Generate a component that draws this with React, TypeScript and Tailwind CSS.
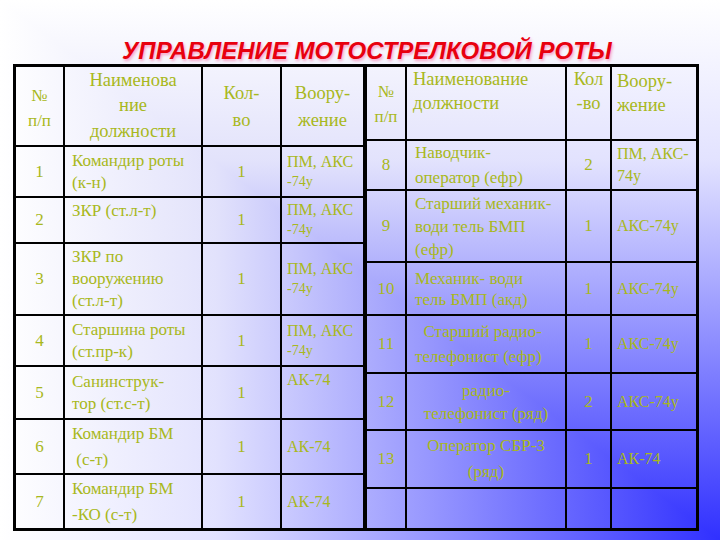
import React from "react";

type RowL = {
  n: string;
  name: string[];
  nameTop?: boolean;
  nameLead?: string;
  q: string;
  w: string[];
  wTop?: boolean;
};

const rowsL: RowL[] = [
  { n: "1", name: ["Командир роты", "(к-н)"], q: "1", w: ["ПМ, АКС", "-74у"] },
  { n: "2", name: ["ЗКР (ст.л-т)"], nameTop: true, q: "1", w: ["ПМ, АКС", "-74у"] },
  { n: "3", name: ["ЗКР по", "вооружению", "(ст.л-т)"], q: "1", w: ["ПМ, АКС", "-74у"] },
  { n: "4", name: ["Старшина роты", "(ст.пр-к)"], q: "1", w: ["ПМ, АКС", "-74у"] },
  { n: "5", name: ["Санинструк-", "тор (ст.с-т)"], q: "1", w: ["АК-74"], wTop: true },
  { n: "6", name: ["Командир БМ", "\u00a0(с-т)"], nameLead: "leading-[26px]", q: "1", w: ["АК-74"] },
  { n: "7", name: ["Командир БМ", "-КО (с-т)"], nameLead: "leading-[26px]", q: "1", w: ["АК-74"] },
];

type RowR = {
  n: string;
  name: string[];
  center?: boolean;
  lead?: string;
  q: string;
  w: string[];
};

const rowsR: RowR[] = [
  { n: "8", name: ["Наводчик-", "оператор (ефр)"], lead: "leading-[25px]", q: "2", w: ["ПМ, АКС-", "74у"] },
  { n: "9", name: ["Старший механик-", "води тель БМП", "(ефр)"], q: "1", w: ["АКС-74у"] },
  { n: "10", name: ["Механик- води", "тель БМП (акд)"], lead: "leading-[21px]", q: "1", w: ["АКС-74у"] },
  { n: "11", name: ["\u00a0\u00a0Старший радио-", "телефонист (ефр)"], lead: "leading-[25px]", q: "1", w: ["АКС-74у"] },
  { n: "12", name: ["радио-", "телефонист (ряд)"], center: true, q: "2", w: ["АКС-74у"] },
  { n: "13", name: ["Оператор СБР-3", "(ряд)"], center: true, lead: "leading-[26px]", q: "1", w: ["АК-74"] },
];

const serif = "font-['Liberation_Serif','Times_New_Roman',serif]";

export default function App() {
  return (
    <div className="relative w-[720px] h-[540px] overflow-hidden bg-[linear-gradient(to_right,#ffffff_0%,#e2e2fb_30%,#3030ff_100%),linear-gradient(to_bottom,#ffffff_0%,#e2e2fb_30%,#3030ff_100%)] bg-blend-lighten text-[#a8b820]">
      <div className="pt-[37px] flex flex-col">
        <div className="h-[27px] pl-[14px] text-center font-['Liberation_Sans',Arial,sans-serif] font-bold italic text-[24px] leading-[27px] text-[#e8000e] [text-shadow:1px_2px_3px_#f6a0c6]">
          УПРАВЛЕНИЕ МОТОСТРЕЛКОВОЙ РОТЫ
        </div>
        <div className="flex pl-[13px] font-serif">
          {/* Left table */}
          <div className={`grid w-[354px] grid-cols-[49px_138px_79px_81px] grid-rows-[80px_51px_46px_72px_51px_53px_55px_53px] border-t-[3px] border-l-[3px] border-b-[3px] border-r-[4px] border-black ${serif}`}>
            <div className="border-r-2 border-b-2 border-black flex flex-col items-center justify-center text-[17px] leading-[25px] pt-[3px]">
              <span>№</span>
              <span>п/п</span>
            </div>
            <div className="border-r-2 border-b-2 border-black flex flex-col items-center justify-center text-[18.5px] leading-[25.5px]">
              <span>Наименова</span>
              <span>ние</span>
              <span>должности</span>
            </div>
            <div className="border-r-2 border-b-2 border-black flex flex-col items-center justify-center text-[18.5px] leading-[27px] pt-[1px]">
              <span>Кол-</span>
              <span>во</span>
            </div>
            <div className="border-b-2 border-black flex flex-col items-center justify-center text-[18.5px] leading-[27px] pt-[1px]">
              <span>Воору-</span>
              <span>жение</span>
            </div>
            {rowsL.map((r, i) => {
              const last = i === rowsL.length - 1;
              const bb = last ? "" : "border-b-2";
              return (
                <React.Fragment key={r.n}>
                  <div className={`border-r-2 ${bb} border-black flex items-center justify-center text-[17px]`}>
                    {r.n}
                  </div>
                  <div
                    className={`border-r-2 ${bb} border-black flex flex-col pl-[7px] text-[17px] ${r.nameLead ?? "leading-[22px]"} ${
                      r.nameTop ? "justify-start pt-[2px]" : "justify-center"
                    }`}
                  >
                    {r.name.map((l, k) => (
                      <span key={k} className="whitespace-pre">
                        {l}
                      </span>
                    ))}
                  </div>
                  <div className={`border-r-2 ${bb} border-black flex items-center justify-center text-[17px]`}>
                    {r.q}
                  </div>
                  <div
                    className={`${bb} border-black flex flex-col pl-[5px] text-[16px] leading-[20px] ${
                      r.wTop ? "justify-start pt-[3px]" : "justify-center"
                    }`}
                  >
                    {r.w.map((l, k) => (
                      <span key={k} className={k === 1 ? "text-[14px]" : ""}>
                        {l}
                      </span>
                    ))}
                  </div>
                </React.Fragment>
              );
            })}
          </div>

          {/* Right table */}
          <div className={`grid w-[332px] grid-cols-[40px_160px_45px_84px] grid-rows-[74px_50px_72px_53px_58px_57px_58px_39px] border-t-[3px] border-r-[3px] border-b-[3px] border-black ${serif}`}>
            <div className="border-r-2 border-b-2 border-black flex flex-col items-center justify-center text-[17px] leading-[25px] pt-[2px]">
              <span>№</span>
              <span>п/п</span>
            </div>
            <div className="border-r-2 border-b-2 border-black flex flex-col justify-start pl-[6px] text-[18.5px] leading-[24px] pt-[0px]">
              <span>Наименование</span>
              <span>должности</span>
            </div>
            <div className="border-r-2 border-b-2 border-black flex flex-col items-center justify-start text-[18.5px] leading-[24px]">
              <span>Кол</span>
              <span>-во</span>
            </div>
            <div className="border-b-2 border-black flex flex-col justify-start pl-[5px] text-[18.5px] leading-[24px] pt-[2px]">
              <span>Воору-</span>
              <span>жение</span>
            </div>
            {rowsR.map((r) => (
              <React.Fragment key={r.n}>
                <div className="border-r-2 border-b-2 border-black flex items-center justify-center text-[17px]">
                  {r.n}
                </div>
                <div
                  className={`border-r-2 border-b-2 border-black flex flex-col justify-center text-[17px] ${r.lead ?? "leading-[23px]"} ${
                    r.center ? "items-center text-center" : "pl-[8px]"
                  }`}
                >
                  {r.name.map((l, k) => (
                    <span key={k} className="whitespace-pre">
                      {l}
                    </span>
                  ))}
                </div>
                <div className="border-r-2 border-b-2 border-black flex items-center justify-center text-[17px]">
                  {r.q}
                </div>
                <div className="border-b-2 border-black flex flex-col justify-center pl-[5px] text-[16px] leading-[22px]">
                  {r.w.map((l, k) => (
                    <span key={k}>{l}</span>
                  ))}
                </div>
              </React.Fragment>
            ))}
            <div className="border-r-2 border-black" />
            <div className="border-r-2 border-black" />
            <div className="border-r-2 border-black" />
            <div />
          </div>
        </div>
      </div>
    </div>
  );
}
